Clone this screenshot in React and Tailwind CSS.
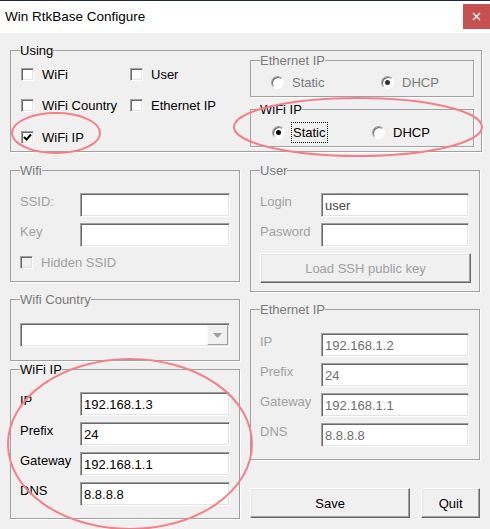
import React from "react";

const GRAY = "text-[#a0a0a0]";
const DIM = "text-[#7a7a7a]";

function Group({ label, dim, className = "", children }) {
  return (
    <fieldset
      className={`border border-[#a0a0a0] shadow-[1px_1px_0_#fff] ${className}`}
    >
      <legend className={`ml-[9px] leading-[15px] ${dim ? DIM : "text-black"}`}>
        {label}
      </legend>
      {children}
    </fieldset>
  );
}

function Check({ label, checked, disabled }) {
  return (
    <div className="flex h-[15px] items-center gap-[8px]">
      <span
        className={`flex h-[13px] w-[13px] shrink-0 items-center justify-center border border-t-[#a0a0a0] border-l-[#a0a0a0] border-r-white border-b-white shadow-[inset_1px_1px_0_#696969,inset_-1px_-1px_0_#e3e3e3] ${
          disabled ? "bg-[#f0f0f0]" : "bg-white"
        }`}
      >
        {checked && (
          <svg width="9" height="9" viewBox="0 0 9 9">
            <path d="M1 4 L3.5 6.5 L8 1.5" stroke="#000" strokeWidth="2" fill="none" />
          </svg>
        )}
      </span>
      <span className={disabled ? GRAY : "text-black"}>{label}</span>
    </div>
  );
}

function Radio({ label, selected, disabled, focus }) {
  return (
    <div className={`flex h-[15px] items-center ${focus ? "gap-[6px]" : "gap-[8px]"}`}>
      <span className="flex h-[13px] w-[13px] shrink-0 items-center justify-center rounded-full border border-t-[#a0a0a0] border-l-[#a0a0a0] border-r-white border-b-white bg-white shadow-[inset_1px_1px_0_#696969]">
        {selected && (
          <span className={`h-[5px] w-[5px] rounded-full ${disabled ? "bg-[#333]" : "bg-black"}`} />
        )}
      </span>
      {focus ? (
        <span className="-my-[3px] border border-dotted border-black px-[1px] py-[2px]">
          {label}
        </span>
      ) : (
        <span className={disabled ? DIM : "text-black"}>{label}</span>
      )}
    </div>
  );
}

function Field({ label, value = "", disabled, labelW, inputW, valueColor }) {
  return (
    <div className="flex h-[24px] items-start">
      <span
        className={`pt-[1px] ${disabled ? GRAY : "text-black"}`}
        style={{ width: labelW }}
      >
        {label}
      </span>
      <input
        readOnly
        value={value}
        className={`h-[24px] border border-t-[#a0a0a0] border-l-[#a0a0a0] border-r-white border-b-white bg-white px-[3px] pt-[1px] shadow-[inset_1px_1px_0_#696969,inset_-1px_-1px_0_#e3e3e3] outline-none ${
          valueColor || (disabled ? "text-[#6d6d6d]" : "text-black")
        }`}
        style={{ width: inputW }}
      />
    </div>
  );
}

function Btn({ children, disabled, className = "" }) {
  return (
    <button
      className={`flex items-center justify-center border border-t-white border-l-white border-r-[#696969] border-b-[#696969] bg-[#f0f0f0] shadow-[inset_-1px_-1px_0_#a0a0a0,inset_1px_1px_0_#e3e3e3] ${
        disabled ? GRAY : "text-black"
      } ${className}`}
    >
      {children}
    </button>
  );
}

function Ellipses() {
  return (
    <svg
      className="pointer-events-none absolute left-0 top-0"
      width="490"
      height="529"
      viewBox="0 0 490 529"
    >
      <g fill="none" stroke="#f28088" strokeWidth="2">
        <ellipse cx="56" cy="133" rx="44" ry="20" />
        <ellipse cx="358" cy="127" rx="124" ry="29" />
        <ellipse cx="130" cy="444" rx="122" ry="85" />
      </g>
    </svg>
  );
}

export default function App() {
  return (
    <div className="relative h-[529px] w-[490px] overflow-hidden bg-[#f0f0f0] font-['Liberation_Sans',Arial,sans-serif] text-[13px] leading-[15px] text-black">
      {/* title bar */}
      <div className="flex h-[33px] items-start justify-between border-t border-[#1f2947] bg-white">
        <span className="pl-[5px] pt-[7px] text-[13.5px] leading-[18px]">Win RtkBase Configure</span>
        <span className="mt-[3px] flex h-[25px] w-[27px] items-center justify-center bg-[#c75050]">
          <svg width="9" height="9" viewBox="0 0 9 9">
            <path d="M1 1 L8 8 M8 1 L1 8" stroke="#fff" strokeWidth="1.4" />
          </svg>
        </span>
      </div>

      <div className="px-[10px]">
        <Group label="Using" className="mt-[10px] w-[472px] pb-[4px]">
          <div className="flex">
            <div className="grid grid-cols-[109px_auto] gap-y-[14px] pl-[10px] pt-[9px]">
              <Check label="WiFi" />
              <Check label="User" />
              <Check label="WiFi Country" />
              <Check label="Ethernet IP" />
              <Check label="WiFi IP" checked />
            </div>
            <div className="-mt-[5px] ml-auto mr-[7px] w-[224px]">
              <Group label="Ethernet IP" dim className="pb-[6px]">
                <div className="grid grid-cols-[110px_auto] pl-[20px] pt-[7px]">
                  <Radio label="Static" disabled />
                  <Radio label="DHCP" disabled selected />
                </div>
              </Group>
              <Group label="WiFi IP" className="mt-[5px] pb-[6px]">
                <div className="grid grid-cols-[100px_auto] pl-[21px] pt-[8px]">
                  <Radio label="Static" selected focus />
                  <Radio label="DHCP" />
                </div>
              </Group>
            </div>
          </div>
        </Group>

        <div className="flex gap-[10px]">
          <div className="w-[230px]">
            <Group label="Wifi" dim className="mt-[11px] pb-[11px]">
              <div className="flex flex-col gap-[6px] pl-[9px] pt-[15px]">
                <Field label="SSID:" disabled labelW={60} inputW={150} />
                <Field label="Key" disabled labelW={60} inputW={150} />
              </div>
              <div className="mt-[8px] pl-[9px]">
                <Check label="Hidden SSID" disabled />
              </div>
            </Group>

            <Group label="Wifi Country" dim className="mt-[10px] pb-[13px]">
              <div className="pl-[9px] pt-[16px]">
                <div className="flex h-[24px] w-[210px] items-center justify-end border border-t-[#a0a0a0] border-l-[#a0a0a0] border-r-white border-b-white bg-white shadow-[inset_1px_1px_0_#696969,inset_-1px_-1px_0_#e3e3e3] pr-[1px]">
                  <span className="flex h-[20px] w-[21px] items-center justify-center border border-t-[#f8f8f8] border-l-[#f8f8f8] border-r-[#a0a0a0] border-b-[#a0a0a0] bg-[#f0f0f0]">
                    <svg width="9" height="5" viewBox="0 0 9 5">
                      <path d="M0 0 L9 0 L4.5 5 Z" fill="#a0a0a0" />
                    </svg>
                  </span>
                </div>
              </div>
            </Group>

            <Group label="WiFi IP" className="mt-[1px] pb-[12px]">
              <div className="flex flex-col gap-[6px] pl-[9px] pt-[15px]">
                <Field label="IP" value="192.168.1.3" labelW={60} inputW={150} />
                <Field label="Prefix" value="24" labelW={60} inputW={150} />
                <Field label="Gateway" value="192.168.1.1" labelW={60} inputW={150} />
                <Field label="DNS" value="8.8.8.8" labelW={60} inputW={150} />
              </div>
            </Group>
          </div>

          <div className="w-[230px]">
            <Group label="User" dim className="mt-[11px] pb-[8px]">
              <div className="flex flex-col gap-[6px] pl-[9px] pt-[15px]">
                <Field label="Login" value="user" disabled labelW={61} inputW={148} valueColor="text-[#444]" />
                <Field label="Pasword" disabled labelW={61} inputW={148} />
                <Btn disabled className="h-[30px] w-[211px]">Load SSH public key</Btn>
              </div>
            </Group>

            <Group label="Ethernet IP" dim className="mt-[10px] pb-[12px]">
              <div className="flex flex-col gap-[6px] pl-[9px] pt-[16px]">
                <Field label="IP" value="192.168.1.2" disabled labelW={61} inputW={148} />
                <Field label="Prefix" value="24" disabled labelW={61} inputW={148} />
                <Field label="Gateway" value="192.168.1.1" disabled labelW={61} inputW={148} />
                <Field label="DNS" value="8.8.8.8" disabled labelW={61} inputW={148} />
              </div>
            </Group>

            <div className="mt-[28px] flex gap-[11px]">
              <Btn className="h-[30px] w-[161px]">Save</Btn>
              <Btn className="h-[30px] w-[59px]">Quit</Btn>
            </div>
          </div>
        </div>
      </div>

      <Ellipses />
    </div>
  );
}
